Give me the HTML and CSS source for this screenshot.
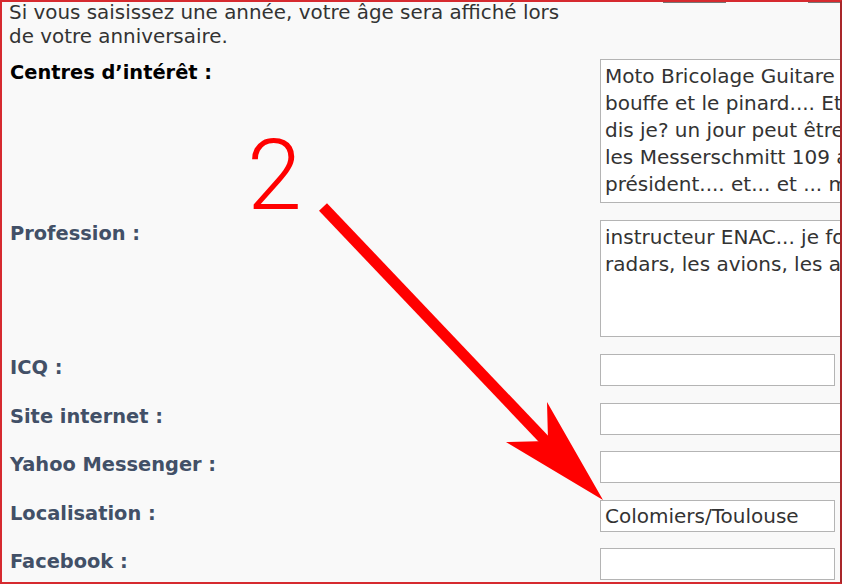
FILE: index.html
```html
<!DOCTYPE html>
<html lang="fr">
<head>
    <meta charset="UTF-8">
    <title>Profil - Centres d'intérêt</title>
    <link rel="stylesheet" href="styles.css">
</head>
<body>
    <div class="frame">
        <div class="prev-fields">
            <span class="prev-box"></span>
            <span class="prev-box prev-box-wide"></span>
        </div>

        <p class="hint">Si vous saisissez une année, votre âge sera affiché lors de votre anniversaire.</p>

        <dl class="row">
            <dt class="label label-active">Centres d’intérêt :</dt>
            <dd><textarea class="area area-tall" wrap="off">Moto Bricolage Guitare la musique
bouffe et le pinard.... Et que
dis je? un jour peut être
les Messerschmitt 109 avec
président.... et... et ... moi</textarea></dd>
        </dl>

        <dl class="row">
            <dt class="label">Profession :</dt>
            <dd><textarea class="area area-short" wrap="off">instructeur ENAC... je forme les contrôleurs
radars, les avions, les aéroports</textarea></dd>
        </dl>

        <dl class="row row-input">
            <dt class="label">ICQ :</dt>
            <dd><input type="text" class="field"></dd>
        </dl>

        <dl class="row row-input">
            <dt class="label">Site internet :</dt>
            <dd><input type="text" class="field field-wide"></dd>
        </dl>

        <dl class="row row-input">
            <dt class="label">Yahoo Messenger :</dt>
            <dd><input type="text" class="field field-wide"></dd>
        </dl>

        <dl class="row row-input">
            <dt class="label">Localisation :</dt>
            <dd><input type="text" class="field" value="Colomiers/Toulouse"></dd>
        </dl>

        <dl class="row row-input">
            <dt class="label">Facebook :</dt>
            <dd><input type="text" class="field"></dd>
        </dl>
    </div>

    <!-- annotation drawn on top of the screenshot -->
    <svg class="annotation" width="842" height="584" viewBox="0 0 842 584">
        <text x="247" y="209" class="annotation-num">2</text>
        <line x1="323" y1="207" x2="556" y2="452" stroke="#ff0000" stroke-width="11"/>
        <polygon points="603,500 547,402 548,441 506,442" fill="#ff0000"/>
    </svg>
</body>
</html>
```

FILE: styles.css
```css
body {
    margin: 0;
    background-color: #f9f9f9;
    font-family: "DejaVu Sans", Verdana, sans-serif;
}
.frame {
    width: 842px;
    height: 584px;
    box-sizing: border-box;
    border: 2px solid #d62a2f;
    border-right-color: #a8262a;
    background-color: #f9f9f9;
    overflow: hidden;
    padding-left: 8px;
}
.prev-fields {
    display: flex;
    height: 1px;
    padding-left: 653px;
    gap: 82px;
}
.prev-box {
    width: 80px;
    height: 0;
    border: 1px solid #777;
    border-top: none;
}
.prev-box-wide {
    width: 40px;
}
.hint {
    margin: -2px 0 0 -1px;
    width: 562px;
    font-size: 19.9px;
    line-height: 24px;
    color: #333;
}
.row {
    display: grid;
    grid-template-columns: 590px 1fr;
    margin: 0 0 17px 0;
}
.row:first-of-type {
    margin-top: 10px;
}
.row-input {
    margin-bottom: 16.5px;
}
.label {
    padding-top: 2px;
    font-size: 19.4px;
    line-height: 24px;
    font-weight: bold;
    color: #425067;
}
.label-active {
    color: #000;
}
dd {
    margin: 0;
}
.area, .field {
    display: block;
    box-sizing: border-box;
    border: 1px solid #b4b4b4;
    background-color: #fff;
    color: #333;
    font-family: "DejaVu Sans", Verdana, sans-serif;
    font-size: 20px;
    margin: 0;
    outline: none;
}
.area {
    width: 600px;
    padding: 3px 4px;
    line-height: 27px;
    resize: none;
    overflow: hidden;
}
.area-tall {
    height: 144px;
}
.area-short {
    height: 117px;
}
.field {
    width: 235px;
    height: 32px;
    padding: 0 4px;
}
.field-wide {
    width: 320px;
}
.annotation {
    position: absolute;
    top: 0;
    left: 0;
    pointer-events: none;
}
.annotation-num {
    font-family: Roboto, "Liberation Sans", sans-serif;
    font-weight: 300;
    font-size: 99px;
    fill: #ff0000;
}
```
